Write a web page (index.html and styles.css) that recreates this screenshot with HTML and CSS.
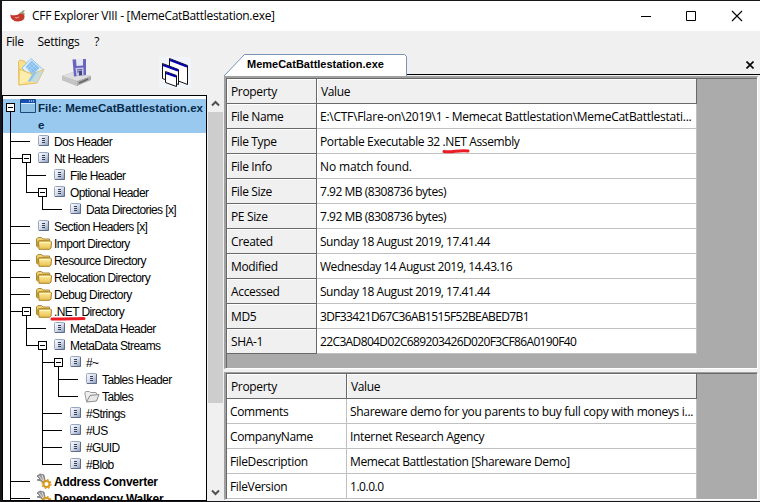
FILE: index.html
```html
<!DOCTYPE html>
<html lang="en">
<head>
<meta charset="utf-8">
<title>CFF Explorer VIII</title>
<link rel="stylesheet" href="styles.css">
</head>
<body>
<svg class="defs" width="0" height="0">
  <defs>
    <linearGradient id="gd" x1="0" y1="0" x2="1" y2="1"><stop offset="0" stop-color="#fff"/><stop offset=".5" stop-color="#d5dcea"/><stop offset="1" stop-color="#8797b5"/></linearGradient>
    <linearGradient id="gf" x1="0" y1="0" x2="0" y2="1"><stop offset="0" stop-color="#fff0a0"/><stop offset="1" stop-color="#e8c050"/></linearGradient>
    <symbol id="doc" viewBox="0 0 11 11"><rect x=".5" y=".5" width="10" height="10" rx="1" fill="url(#gd)" stroke="#98a6be"/><path d="M10.500 1v9.500H1" fill="none" stroke="#5c6c89"/><path d="M4 3.500h3M4 5.500h3M4 7.500h3" stroke="#35415c"/></symbol>
    <symbol id="folder" viewBox="0 0 16 13"><path d="M.5 9.500V2L2 .5h3.500L7 2h6.500v3" fill="#f0d070" stroke="#a98a3c"/><path d="M1.500 10.500V4.500l1-1h10" fill="#e5bd48" stroke="#c49c38"/><path d="M3 12.300 2.500 5l1-1h11l1 1-.5 6-1.500 1.300z" fill="url(#gf)" stroke="#a88228"/><path d="M4 5.500h10" stroke="#fff6c4"/></symbol>
    <symbol id="openfolder" viewBox="0 0 16 13"><path d="M2.500 11.500.800 3l1-1.500h3.500l1.200 1H12l.8 1.500" fill="#eee" stroke="#999"/><path d="M2.500 12 6 5.500 10 5l5-.5-2.500 6.500-4 .5z" fill="#e8e8e8" stroke="#888"/></symbol>
    <symbol id="gear" viewBox="0 0 16 16"><path d="M1 3 4 1l4 1 1 5 3 3-3 2-4-4-4-1 3-1z" fill="#999" stroke="#666" stroke-width=".7"/><path d="m3 3 4 5M6 2l2 6" stroke="#ddd"/><circle cx="10.500" cy="11" r="3" fill="#fff" stroke="#d99a20" stroke-width="2"/><circle cx="10.500" cy="11" r="4.400" fill="none" stroke="#d99a20" stroke-width="1.300" stroke-dasharray="1.700 1.750"/></symbol>
  </defs>
</svg>
<div class="window">
  <header class="titlebar">
    <svg class="app-icon" width="16" height="13" viewBox="0 0 16 13"><path d="M.5 4.500C3 6 4 5 7 5L9.500 3.500c3-1 5.500.5 5 4-.5 3-4 4-7.500 4C3 11 0 8.500.5 4.500z" fill="#c43a30"/><path d="M5 7.500c2 1 3 0 4-.5" stroke="#e89a8c" stroke-width="1.300" fill="none"/><path d="M9.500 3.500c2-1 4-1 5 1M12 3.500c0-1.500.5-2.500 2.500-2.800" stroke="#8a9a70" stroke-width="1.300" fill="none"/></svg>
    <span class="caption">CFF Explorer VIII - [MemeCatBattlestation.exe]</span>
    <svg class="controls" width="102" height="12" viewBox="0 0 102 12"><path d="M0 6.500h10M45.500 1.500h9v9h-9z" fill="none" stroke="#000"/><path d="m91 1 10 10M101 1 91 11" stroke="#000" stroke-width="1.100"/></svg>
  </header>
  <nav class="menu"><span>File</span><span class="settings">Settings</span><span>?</span></nav>
  <div class="main">
    <aside class="left">
      <div class="toolbar">
        <svg width="28" height="30" viewBox="0 0 28 30"><path d="M1.500 4.500 3 3l5 1.500 2 3v18L2 28z" fill="#f9e08e" stroke="#e6bf5c"/><path d="M5 11 14 1.500l12 11L17 24z" fill="#e3f1fb" stroke="#8cc3ea"/><path d="m8.500 10 6-6.500 8 7.500-7 7z" fill="#86bff0"/><path d="m11 7 8 8M13 5l8 8M9 9l7 7M19 7l-7 7M17 5l-7 7" stroke="#a9d3f5" stroke-width=".8"/><path d="M2 28V12l13 5 12-4.500-7 13.500z" fill="#fbe394" stroke="#e6bd58"/><path d="m15 17 11.500-4-6.500 13-8-2z" fill="#bcd9e8" opacity=".85"/><path d="m15 17 5-2-7 10-2-1z" fill="#8fc4ec"/><path d="m2.500 27.500 1-14 11 4.500-4 6z" fill="#fdeeae"/></svg>
        <svg class="save" width="30" height="28" viewBox="0 0 30 28"><path d="m0 18 11-4 18 4v4l-14 6L0 22z" fill="#aaa"/><path d="m0 18 11-4 18 4-14 5z" fill="#dedede"/><path d="m0 18 15 5v5L0 22z" fill="#c4c4c4"/><path d="m17 25 9-4" stroke="#666" stroke-width="1.500"/><path d="M10.500 1.500 24 1v16l-12 1.500z" fill="#6963c2"/><path d="M14 1h7v6.500l-6.500.5z" fill="#e6e8f0"/><path d="m13.500 10 8-.5V17l-7 1z" fill="#c9cbe5"/><path d="m15 12 5-.5M15 14l3-.3" stroke="#55559a"/><path d="m17 13 3-.5V17l-3 .5z" fill="#45457c"/></svg>
        <svg class="wins" width="32" height="31" viewBox="0 0 32 31"><path fill="#f1f4fb" d="M0 0h32v31H0z"/><g fill="#fff" stroke="#111"><path d="m10.500 1.500 18 7v19l-18-7z"/><path d="m3.500 6.500 16 6v15l-16-6z"/><path d="m6.500 14.500 11 4v11l-11-4z"/></g><path d="m11 3 17 6.500M4 8l15 5.500M7 16l10 3.500" stroke="#0000ad" stroke-width="2.200"/></svg>
      </div>
      <div class="browser">
        <div class="tree">
          <div class="root"><i class="box"></i><svg width="17" height="14" viewBox="0 0 17 14"><path d="M.5.500h15v13H.500z" fill="#8fc0e6" stroke="#174b7a"/><path d="M1 1h14v3H1z" fill="#1450b8"/><path d="M9 2h1m1 0h1m1 0h1" stroke="#fff"/><path d="M1 4.500h14" stroke="#d8ecfa"/></svg><b>File: MemeCatBattlestation.ex<br>e</b></div>
          <ul class="top">
            <li><div class="row"><svg class="doc"><use href="#doc"/></svg><span>Dos Header</span></div></li>
            <li><div class="row parent"><i class="box"></i><svg class="doc"><use href="#doc"/></svg><span>Nt Headers</span></div>
              <ul>
                <li><div class="row"><svg class="doc"><use href="#doc"/></svg><span>File Header</span></div></li>
                <li><div class="row parent"><i class="box"></i><svg class="doc"><use href="#doc"/></svg><span>Optional Header</span></div>
                  <ul><li><div class="row"><svg class="doc"><use href="#doc"/></svg><span>Data Directories [x]</span></div></li></ul>
                </li>
              </ul>
            </li>
            <li><div class="row"><svg class="doc"><use href="#doc"/></svg><span>Section Headers [x]</span></div></li>
            <li><div class="row"><svg class="folder"><use href="#folder"/></svg><span>Import Directory</span></div></li>
            <li><div class="row"><svg class="folder"><use href="#folder"/></svg><span>Resource Directory</span></div></li>
            <li><div class="row"><svg class="folder"><use href="#folder"/></svg><span>Relocation Directory</span></div></li>
            <li><div class="row"><svg class="folder"><use href="#folder"/></svg><span>Debug Directory</span></div></li>
            <li><div class="row parent"><i class="box"></i><svg class="folder"><use href="#folder"/></svg><span>.NET Directory</span><svg class="mark" width="36" height="5" viewBox="0 0 36 5"><path d="M2 3c10 .5 22-.5 32-.5" fill="none" stroke="#ec1c24" stroke-width="3" stroke-linecap="round"/></svg></div>
              <ul>
                <li><div class="row"><svg class="doc"><use href="#doc"/></svg><span>MetaData Header</span></div></li>
                <li><div class="row parent"><i class="box"></i><svg class="doc"><use href="#doc"/></svg><span>MetaData Streams</span></div>
                  <ul>
                    <li><div class="row parent"><i class="box"></i><svg class="doc"><use href="#doc"/></svg><span>#~</span></div>
                      <ul>
                        <li><div class="row"><svg class="doc"><use href="#doc"/></svg><span>Tables Header</span></div></li>
                        <li><div class="row"><svg class="folder"><use href="#openfolder"/></svg><span>Tables</span></div></li>
                      </ul>
                    </li>
                    <li><div class="row"><svg class="doc"><use href="#doc"/></svg><span>#Strings</span></div></li>
                    <li><div class="row"><svg class="doc"><use href="#doc"/></svg><span>#US</span></div></li>
                    <li><div class="row"><svg class="doc"><use href="#doc"/></svg><span>#GUID</span></div></li>
                    <li><div class="row"><svg class="doc"><use href="#doc"/></svg><span>#Blob</span></div></li>
                  </ul>
                </li>
              </ul>
            </li>
            <li><div class="row tool"><svg class="gear"><use href="#gear"/></svg><span>Address Converter</span></div></li>
            <li class="open"><div class="row tool"><svg class="gear"><use href="#gear"/></svg><span>Dependency Walker</span></div></li>
          </ul>
        </div>
        <div class="scrollbar">
          <svg width="17" height="17" viewBox="0 0 17 17"><path d="m5 10.500 3.500-3.500 3.500 3.500" fill="none" stroke="#505050" stroke-width="2"/></svg>
          <div class="thumb"></div>
          <svg width="17" height="17" viewBox="0 0 17 17"><path d="m5 6.500 3.500 3.500L12 6.500" fill="none" stroke="#505050" stroke-width="2"/></svg>
        </div>
      </div>
    </aside>
    <section class="right">
      <div class="tabs">
        <div class="tab"><svg width="184" height="22" viewBox="0 0 184 22"><path d="M0 22 20.500.500h160l2 2V22" fill="#fff" stroke="#7893b4"/></svg><b>MemeCatBattlestation.exe</b></div>
        <div class="tabfill"><svg width="8" height="8" viewBox="0 0 8 8"><path d="m.5.500 7 7M7.500.500l-7 7" stroke="#000" stroke-width="1.600"/></svg></div>
      </div>
      <div class="panel info">
        <div class="grid">
          <div class="h">Property</div><div class="h">Value</div>
          <div class="k">File Name</div><div class="path">E:\CTF\Flare-on\2019\1 - Memecat Battlestation\MemeCatBattlestati...</div>
          <div class="k">File Type</div><div class="type">Portable Executable 32 .NET Assembly<svg class="mark type-mark" width="28" height="6" viewBox="0 0 28 6"><path d="M2 3.500C9 5 18 1.500 26 3" fill="none" stroke="#ec1c24" stroke-width="3" stroke-linecap="round"/></svg></div>
          <div class="k">File Info</div><div class="wide">No match found.</div>
          <div class="k">File Size</div><div class="date">7.92 MB (8308736 bytes)</div>
          <div class="k">PE Size</div><div class="date">7.92 MB (8308736 bytes)</div>
          <div class="k">Created</div><div class="date">Sunday 18 August 2019, 17.41.44</div>
          <div class="k">Modified</div><div class="date">Wednesday 14 August 2019, 14.43.16</div>
          <div class="k">Accessed</div><div class="date">Sunday 18 August 2019, 17.41.44</div>
          <div class="k">MD5</div><div class="hash">3DF33421D67C36AB1515F52BEABED7B1</div>
          <div class="k">SHA-1</div><div class="hash">22C3AD804D02C689203426D020F3CF86A0190F40</div>
        </div>
      </div>
      <div class="panel version">
        <div class="grid">
          <div class="h">Property</div><div class="h">Value</div>
          <div>Comments</div><div class="comment">Shareware demo for you parents to buy full copy with moneys i...</div>
          <div>CompanyName</div><div>Internet Research Agency</div>
          <div>FileDescription</div><div class="type">Memecat Battlestation [Shareware Demo]</div>
          <div>FileVersion</div><div class="date">1.0.0.0</div>
        </div>
      </div>
    </section>
  </div>
</div>
</body>
</html>
```
FILE: styles.css
```css
* { box-sizing: border-box; }
body { margin: 0; width: 760px; height: 502px; overflow: hidden; background: #17171b; font: 12px/16px "Open Sans", "Noto Sans", sans-serif; letter-spacing: -.35px; color: #000; }
svg { display: block; flex: none; }
.defs { position: absolute; }
.window { margin: 1px 0 0 2px; width: 758px; height: 500px; display: flex; flex-direction: column; background: #f0f0f0; }
.titlebar { height: 30px; background: #fff; display: flex; align-items: center; padding: 0 17px 0 8px; flex: none; }
.caption { margin-left: 6px; letter-spacing: -.3px; }
.controls { margin-left: auto; }
.menu { height: 22px; display: flex; align-items: center; padding-left: 4px; flex: none; }
.settings { margin: 0 15px 0 14px; }
.main { display: flex; flex: 1; min-height: 0; }
.left { width: 222px; display: flex; flex-direction: column; }
.toolbar { height: 42px; display: flex; align-items: flex-start; padding: 4px 0 0 15px; flex: none; }
.save { margin-left: 17px; margin-top: 1px; }
.wins { margin-left: 67px; }
.browser { display: flex; flex: 1; min-height: 0; }
.tree { width: 205px; border: 1px solid #000; background: #fff; overflow: hidden; padding-top: 3px; font: 12px/17px "Liberation Sans", Arial, sans-serif; letter-spacing: -.6px; white-space: nowrap; }
.root { position: relative; height: 34px; background: #99c9ef; color: #06294a; display: flex; padding-left: 17px; letter-spacing: .05px; }
.root b { margin-left: 1px; font-size: 11.5px; padding-top: 1px; }
.root .box { left: 3px; top: 4px; }
.tree ul { list-style: none; margin: 0; padding: 0; }
.tree ul ul { margin-left: 16px; }
.tree li { position: relative; }
.tree li::before { content: ""; position: absolute; left: 7px; top: -10px; bottom: 0; width: 1px; background: #000; }
.tree .top > li:first-child::before { top: -21px; }
.tree li:last-child::before { bottom: auto; height: 19px; }
.tree li.open::before { height: 30px; }
.row { position: relative; display: flex; height: 17px; padding-left: 35px; }
.row span { padding-top: 1px; }
.row::before { content: ""; position: absolute; left: 7px; top: 8px; width: 20px; height: 1px; background: #000; }
.row.parent::before { width: 12px; }
.box { position: absolute; z-index: 1; left: 19px; top: 4px; width: 9px; height: 9px; border: 1px solid #000; background: linear-gradient(#000, #000) center / 5px 1px no-repeat #fff; }
.doc { width: 11px; height: 11px; margin: 2px 5px 0 0; }
.folder { width: 16px; height: 13px; margin: 2px 2px 0 -2px; }
.gear { width: 16px; height: 16px; margin: 0 2px 0 -2px; }
.tool { font-weight: bold; letter-spacing: -.25px; }
.mark { position: absolute; z-index: 2; }
.row .mark { left: 47px; top: 13px; }
.scrollbar { width: 17px; display: flex; flex-direction: column; }
.scrollbar svg:last-child { margin-top: auto; }
.thumb { width: 15px; height: 291px; margin-left: 1px; background: #cdcdcd; }
.right { width: 536px; display: flex; flex-direction: column; }
.tabs { height: 23px; padding-top: 1px; display: flex; flex: none; }
.tab { position: relative; width: 183px; flex: none; }
.tab b { position: absolute; left: 23px; top: 3px; font: bold 11px/14px "Liberation Sans", Arial, sans-serif; letter-spacing: 0; }
.tabfill { flex: 1; border-bottom: 1px solid #000; margin-bottom: 1px; display: flex; justify-content: flex-end; padding: 7px 6px 0 0; }
.panel { width: 534px; flex: none; background: #ababab; border: 1px solid #a0a0a0; border-width: 2px 1px 1px 2px; border-right-color: #fff; border-bottom-color: #fff; box-shadow: inset 1px 1px #696969; padding: 1px 0 0 1px; overflow: hidden; }
.info { height: 293px; }
.version { height: 128px; margin-top: 3px; border-top-width: 1px; }
.grid { display: grid; grid-template-columns: 90px 380px; grid-auto-rows: 25px; width: 470px; }
.version .grid { grid-template-columns: 120px 350px; }
.grid > div { position: relative; background: #fff; border: solid #c0c0c0; border-width: 0 1px 1px 0; padding: 5px 0 0 3px; white-space: nowrap; }
.grid > .h, .grid > .k { background: #f0f0f0; border-color: #696969; padding-left: 4px; box-shadow: inset 1px 1px #fff; }
.path { letter-spacing: -.26px; }
.type { letter-spacing: -.38px; }
.wide { letter-spacing: -.15px; }
.date { letter-spacing: -.47px; }
.hash { letter-spacing: -.63px; }
.comment { letter-spacing: -.31px; }
.type-mark { left: 125px; top: 19px; }
```
